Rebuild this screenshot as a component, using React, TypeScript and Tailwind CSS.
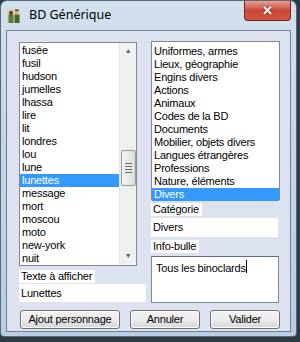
import React from 'react';

const leftItems = [
  'fusée', 'fusil', 'hudson', 'jumelles', 'lhassa', 'lire', 'lit', 'londres',
  'lou', 'lune', 'lunettes', 'message', 'mort', 'moscou', 'moto', 'new-york', 'nuit',
];

const rightItems = [
  'Uniformes, armes', 'Lieux, géographie', 'Engins divers', 'Actions', 'Animaux',
  'Codes de la BD', 'Documents', 'Mobilier, objets divers', 'Langues étrangères',
  'Professions', 'Nature, éléments', 'Divers',
];

const AppIcon = () => (
  <svg width="13" height="14" viewBox="0 0 13 14">
    <rect x="0" y="0" width="13" height="14" fill="#d8d2b8" />
    <circle cx="4" cy="4" r="2.2" fill="#6b4a2a" />
    <rect x="1.5" y="6" width="5" height="8" fill="#5a7a3a" />
    <circle cx="9.5" cy="3.5" r="2" fill="#e0b080" />
    <rect x="7.5" y="5.5" width="5" height="8.5" fill="#3f6a2f" />
    <rect x="8" y="0.5" width="3.5" height="1.5" fill="#2a4a20" />
  </svg>
);

const Button = ({ label, w }: { label: string; w: string }) => (
  <button
    className={`${w} h-[19px] rounded-[3px] border border-[#707070] bg-gradient-to-b from-[#f3f3f3] via-[#ebebeb] to-[#d6d6d6] text-[11px] leading-none text-black tracking-[-0.2px] shadow-[inset_0_0_0_1px_#fcfcfc]`}
  >
    {label}
  </button>
);

const Label = ({ text }: { text: string }) => (
  <div className="w-fit h-[13px] bg-white text-[11px] leading-[13px] pl-[2px] pr-[3px] text-black whitespace-nowrap">{text}</div>
);

export default function App() {
  return (
    <div className="w-[300px] h-[342px] bg-[#2f3a46] overflow-hidden tracking-[-0.2px]" style={{ fontFamily: '"Liberation Sans", Arial, sans-serif' }}>
      <div className="relative w-[297px] h-[337px] rounded-t-[7px] rounded-b-[4px] border border-[#5a6a7a] bg-gradient-to-b from-[#d3e0ee] via-[#c4d5e7] to-[#b8cde2] flex flex-col px-[5px] pb-[4px]">
        {/* title bar */}
        <div className="h-[29px] flex items-center gap-[9px] pl-[1px]">
          <AppIcon />
          <span className="text-[12.5px] text-black pb-[1px] tracking-normal" style={{ fontFamily: '"Noto Sans", "Open Sans", sans-serif' }}>BD Générique</span>
        </div>
        <div className="absolute right-[5px] top-0 w-[47px] h-[20px] rounded-b-[4px] border border-t-0 border-[#6b2a22] bg-gradient-to-b from-[#e8a093] via-[#c9473a] to-[#d2553f] flex items-center justify-center">
          <span className="text-white font-bold text-[13px] leading-none" style={{ textShadow: '0 0 2px #5a1a10' }}>✕</span>
        </div>

        {/* client area */}
        <div className="flex-1 border border-[#6f7f8f] bg-[#dde2f1] flex flex-col pl-[12px] pt-[10px]">
          <div className="flex gap-[5px]">
            {/* left column */}
            <div className="w-[127px] flex flex-col">
              <div className="mt-[1px] w-[118px] h-[224px] border border-[#828790] bg-white flex">
                <div className="flex-1 pt-[1px] flex flex-col">
                  {leftItems.map((it) => (
                    <div
                      key={it}
                      className={`h-[13px] leading-[13px] text-[11px] pl-[2px] ${it === 'lunettes' ? 'bg-[#3399ff] text-white' : 'text-black'}`}
                    >
                      {it}
                    </div>
                  ))}
                </div>
                <div className="w-[17px] bg-[#f0f0f0] border-l border-[#e6e6e6] flex flex-col items-center">
                  <div className="h-[17px] flex items-center justify-center text-[7px] text-[#606060]">▲</div>
                  <div className="flex-1 w-full relative">
                    <div className="absolute left-[1px] top-[90px] w-[15px] h-[36px] rounded-[2px] border border-[#969696] bg-gradient-to-r from-[#f4f4f4] to-[#dcdcdc] flex flex-col items-center justify-center gap-[2px]">
                      <div className="w-[7px] h-[1px] bg-[#6a6a6a]" />
                      <div className="w-[7px] h-[1px] bg-[#6a6a6a]" />
                      <div className="w-[7px] h-[1px] bg-[#6a6a6a]" />
                      <div className="w-[7px] h-[1px] bg-[#6a6a6a]" />
                    </div>
                  </div>
                  <div className="h-[17px] flex items-center justify-center text-[7px] text-[#606060]">▼</div>
                </div>
              </div>
              <div className="mt-[4px]"><Label text="Texte à afficher" /></div>
              <div className="mt-[1px] w-[127px] h-[18px] bg-white text-[11px] leading-[18px] pl-[2px] text-black">Lunettes</div>
            </div>

            {/* right column */}
            <div className="w-[129px] flex flex-col">
              <div className="w-[129px] h-[159px] border border-[#828790] bg-white pt-[3px] flex flex-col">
                {rightItems.map((it) => (
                  <div
                    key={it}
                    className={`h-[13px] leading-[13px] text-[11px] pl-[2px] whitespace-nowrap ${it === 'Divers' ? 'bg-[#3399ff] text-white' : 'text-black'}`}
                  >
                    {it}
                  </div>
                ))}
              </div>
              <div className="mt-[3px]"><Label text="Catégorie" /></div>
              <div className="mt-[2px] w-[127px] h-[19px] bg-white text-[11px] leading-[19px] pl-[2px] text-black">Divers</div>
              <div className="mt-[3px]"><Label text="Info-bulle" /></div>
              <div className="mt-[3px] w-[128px] h-[47px] border border-[#7c8797] border-t-[#5a6a80] bg-white text-[11px] pl-[4px] pt-[3px] text-black flex items-start">
                <span className="whitespace-nowrap">Tous les binoclards</span>
                <span className="w-[1px] h-[13px] bg-black" />
              </div>
            </div>
          </div>

          {/* buttons */}
          <div className="mt-[7px] flex pl-[1px] gap-[10px]">
            <Button label="Ajout personnage" w="w-[100px]" />
            <Button label="Annuler" w="w-[70px]" />
            <Button label="Valider" w="w-[70px]" />
          </div>
        </div>
      </div>
    </div>
  );
}
